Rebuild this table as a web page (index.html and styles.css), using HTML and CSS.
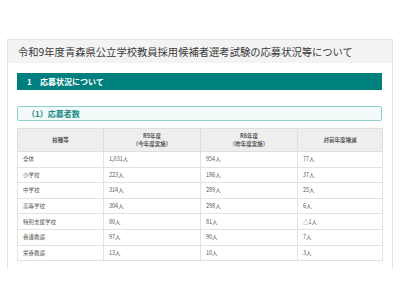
FILE: index.html
```html
<!DOCTYPE html>
<html lang="ja">
<head>
<meta charset="utf-8">
<link rel="stylesheet" href="styles.css">
</head>
<body>
<div class="card">
  <div class="card-head">令和9年度青森県公立学校教員採用候補者選考試験の応募状況等について</div>
  <div class="card-body">
    <div class="bar"><span class="num">1</span>応募状況について</div>
    <div class="sub">（1）応募者数</div>
    <table class="tbl">
      <colgroup><col class="c1"><col class="c2"><col class="c3"><col class="c4"></colgroup>
      <thead>
        <tr><th>校種等</th><th>R9年度<br>（今年度実施）</th><th>R8年度<br>（昨年度実施）</th><th>対前年度増減</th></tr>
      </thead>
      <tbody>
        <tr><td>全体</td><td>1,031人</td><td>954人</td><td>77人</td></tr>
        <tr><td>小学校</td><td>223人</td><td>186人</td><td>37人</td></tr>
        <tr><td>中学校</td><td>314人</td><td>289人</td><td>25人</td></tr>
        <tr><td>高等学校</td><td>304人</td><td>298人</td><td>6人</td></tr>
        <tr><td>特別支援学校</td><td>80人</td><td>81人</td><td>△1人</td></tr>
        <tr><td>養護教諭</td><td>97人</td><td>90人</td><td>7人</td></tr>
        <tr><td>栄養教諭</td><td>13人</td><td>10人</td><td>3人</td></tr>
      </tbody>
    </table>
  </div>
</div>
</body>
</html>
```
FILE: styles.css
```css
html, body {
  margin: 0;
  padding: 0;
  background: #fff;
}
body {
  font-family: "Noto Sans CJK JP", "Noto Sans", sans-serif;
  color: #333;
}
.card {
  margin: 39px 7px 0 7px;
  border: 1px solid #e4e4e4;
  border-bottom: none;
}
.card-head {
  background: #f3f3f3;
  height: 23px;
  line-height: 23px;
  padding-left: 10px;
  font-size: 10.3px;
  color: #3a3a3a;
  white-space: nowrap;
  overflow: hidden;
}
.card-body {
  padding: 10px 10px 7px 9px;
}
.bar {
  background: #007f7f;
  color: #fff;
  height: 17px;
  line-height: 17px;
  font-size: 8px;
  font-weight: bold;
  padding-left: 10px;
  display: flex;
}
.bar .num {
  width: 13px;
}
.sub {
  margin-top: 16px;
  height: 13px;
  line-height: 13px;
  border: 1px solid #8ed1cc;
  border-radius: 2px;
  background: #f3fafa;
  color: #1b8a86;
  font-size: 8px;
  font-weight: bold;
  padding-left: 9px;
}
.tbl {
  margin-top: 7px;
  width: 100%;
  border-collapse: collapse;
  table-layout: fixed;
  font-size: 5.5px;
  color: #555;
}
.c1 { width: 86px; }
.c2 { width: 97px; }
.c3 { width: 97px; }
.c4 { width: 85px; }
.tbl th {
  background: #eeeeee;
  border: 1px solid #dedede;
  height: 22px;
  font-weight: bold;
  text-align: center;
  vertical-align: middle;
  line-height: 8px;
  padding: 0;
  color: #555;
}
.tbl td {
  border: 1px solid #e2e2e2;
  height: 14.6px;
  padding: 0 0 0 5px;
  vertical-align: middle;
}
```
